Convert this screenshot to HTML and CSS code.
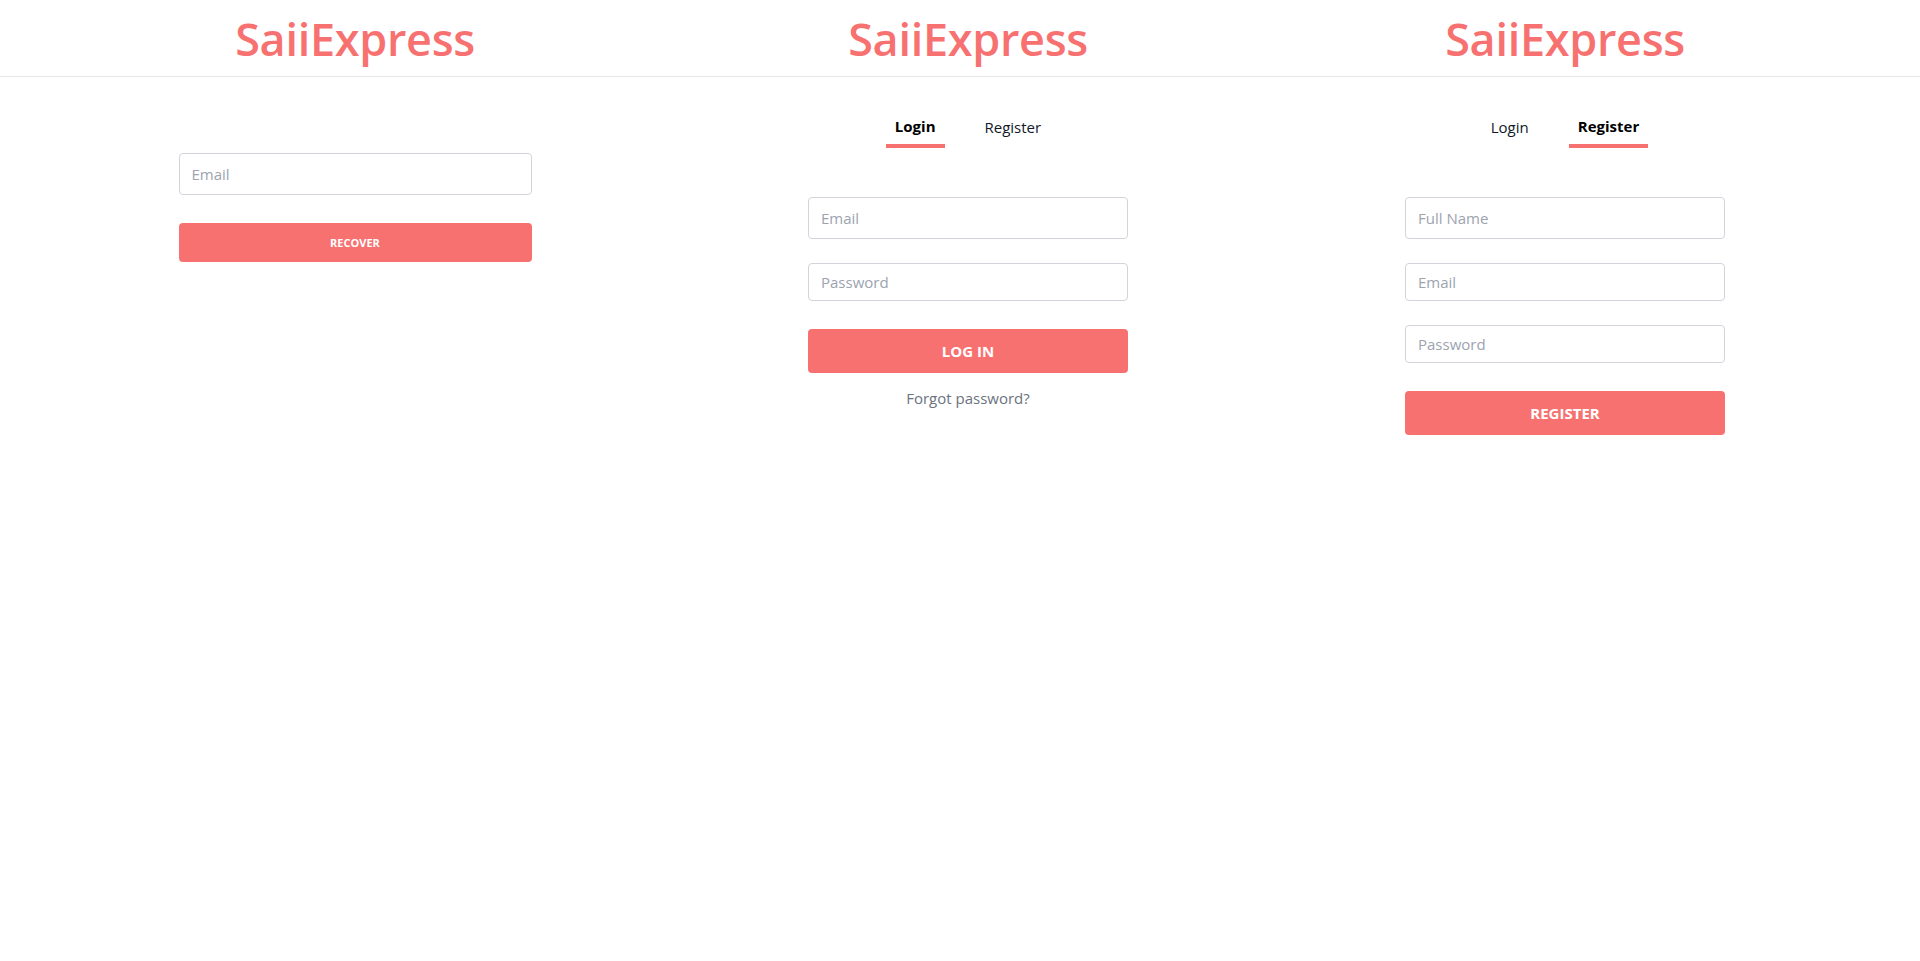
FILE: index.html
```html
<!DOCTYPE html>
<html lang="en">
<head>
<meta charset="utf-8">
<title>SaiiExpress</title>
<link rel="stylesheet" href="styles.css">
</head>
<body>
<header class="topbar">
  <div class="brand-cell"><span class="brand">SaiiExpress</span></div>
  <div class="brand-cell"><span class="brand">SaiiExpress</span></div>
  <div class="brand-cell"><span class="brand">SaiiExpress</span></div>
</header>
<main class="panels">
  <section class="panel panel-recover">
    <form class="form form-wide">
      <input class="field field-lg" type="email" placeholder="Email">
      <button class="btn btn-small" type="button">RECOVER</button>
    </form>
  </section>

  <section class="panel panel-tabs">
    <nav class="tabs">
      <span class="tab tab-active">Login</span>
      <span class="tab">Register</span>
    </nav>
    <form class="form">
      <input class="field field-lg" type="email" placeholder="Email">
      <input class="field" type="password" placeholder="Password">
      <button class="btn" type="button">LOG IN</button>
      <a class="forgot" href="#">Forgot password?</a>
    </form>
  </section>

  <section class="panel panel-tabs">
    <nav class="tabs">
      <span class="tab">Login</span>
      <span class="tab tab-active">Register</span>
    </nav>
    <form class="form">
      <input class="field field-lg" type="text" placeholder="Full Name">
      <input class="field" type="email" placeholder="Email">
      <input class="field" type="password" placeholder="Password">
      <button class="btn" type="button">REGISTER</button>
    </form>
  </section>
</main>
</body>
</html>
```

FILE: styles.css
```css
* {
  box-sizing: border-box;
}

html, body {
  margin: 0;
  padding: 0;
  background: #ffffff;
  font-family: "Open Sans", "Noto Sans", "Liberation Sans", sans-serif;
  color: #111827;
}

.topbar,
.panels {
  display: grid;
  grid-template-columns: 710px 516px 678px;
}

.topbar {
  height: 77px;
  border-bottom: 1px solid #e5e7eb;
}

.brand-cell {
  display: flex;
  justify-content: center;
  padding-top: 9px;
}

.brand {
  font-size: 45px;
  font-weight: 600;
  line-height: 60px;
  color: #f87171;
  letter-spacing: -0.3px;
}

.panel {
  display: flex;
  flex-direction: column;
  align-items: center;
}

.panel-recover {
  padding-top: 76px;
}

.panel-tabs {
  padding-top: 38px;
}

.tabs {
  display: flex;
  gap: 31px;
  margin-bottom: 49px;
}

.tab {
  display: block;
  padding: 0 9px 5px;
  font-size: 15px;
  line-height: 24px;
  color: #111827;
  border-bottom: 4px solid transparent;
}

.tab-active {
  font-weight: 700;
  color: #000000;
  border-bottom-color: #f87171;
  line-height: 22px;
  padding-bottom: 7px;
}

.form {
  display: flex;
  flex-direction: column;
  width: 320px;
}

.form-wide {
  width: 353px;
}

.field {
  height: 38px;
  margin: 0 0 24px;
  padding: 0 12px;
  border: 1px solid #d1d5db;
  border-radius: 4px;
  font-family: inherit;
  font-size: 15px;
  color: #111827;
  background: #ffffff;
  outline: none;
}

.field-lg {
  height: 42px;
}

.field::placeholder {
  color: #9ca3af;
}

.btn {
  height: 44px;
  margin-top: 4px;
  border: 0;
  border-radius: 4px;
  background: #f87171;
  color: #ffffff;
  font-family: inherit;
  font-size: 15px;
  font-weight: 700;
  cursor: pointer;
}

.btn-small {
  height: 39px;
  font-size: 11px;
}

.forgot {
  margin-top: 13px;
  text-align: center;
  font-size: 15px;
  line-height: 24px;
  color: #6b7280;
  text-decoration: none;
}
```
